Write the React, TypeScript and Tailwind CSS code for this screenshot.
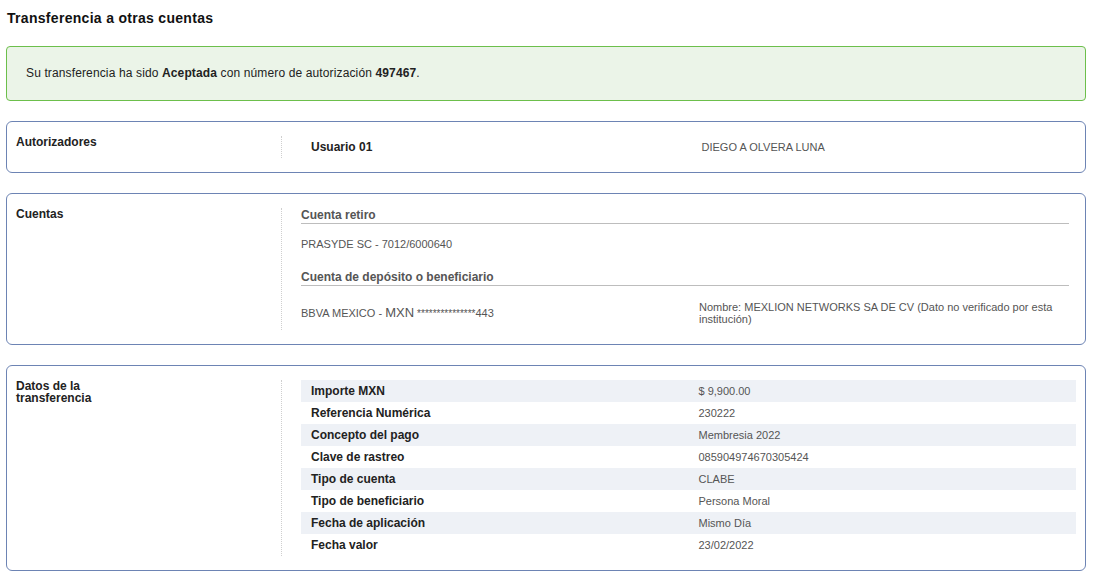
import React from "react";

function Card({ label, children }: { label: React.ReactNode; children: React.ReactNode }) {
  return (
    <div className="flex rounded-[6px] border border-[#6d84b4] bg-white px-[9px] py-[14px]">
      <div className="w-[265px] shrink-0 text-[12px] font-bold leading-[12px] text-[#222]">{label}</div>
      <div className="min-w-0 flex-1 border-l border-dotted border-[#cfcfcf] pl-[19px]">{children}</div>
    </div>
  );
}

const rows: [string, string][] = [
  ["Importe MXN", "$ 9,900.00"],
  ["Referencia Numérica", "230222"],
  ["Concepto del pago", "Membresia 2022"],
  ["Clave de rastreo", "085904974670305424"],
  ["Tipo de cuenta", "CLABE"],
  ["Tipo de beneficiario", "Persona Moral"],
  ["Fecha de aplicación", "Mismo Día"],
  ["Fecha valor", "23/02/2022"],
];

export default function App() {
  return (
    <div
      className="min-h-[585px] w-[1092px] bg-white px-[6px] pt-[10px] pb-[14px]"
      style={{ fontFamily: '"Liberation Sans", Arial, sans-serif' }}
    >
      <h1 className="pl-[1px] text-[14px] font-bold leading-[16px] tracking-[0.3px] text-[#111]">
        Transferencia a otras cuentas
      </h1>

      <div className="mt-[20px] rounded-[4px] border border-[#6cbf4b] bg-[#ebf4e8] py-[19px] pl-[19px] text-[12px] leading-[15px] tracking-[0.13px] text-[#222]">
        Su transferencia ha sido <b>Aceptada</b> con número de autorización <b>497467</b>.
      </div>

      <div className="mt-[20px]">
        <Card label="Autorizadores">
          <div className="grid h-[22px] grid-cols-2 items-center">
            <div className="pl-[10px] text-[12px] font-bold text-[#222]">Usuario 01</div>
            <div className="pl-[13px] text-[11px] text-[#555]">DIEGO A OLVERA LUNA</div>
          </div>
        </Card>
      </div>

      <div className="mt-[20px]">
        <Card label="Cuentas">
          <div className="pr-[7px] pb-[5px]">
            <div className="border-b border-[#bdbdbd] pb-[1px] text-[12px] font-bold leading-[14px] text-[#555]">
              Cuenta retiro
            </div>
            <div className="mt-[14px] text-[11px] leading-[13px] text-[#555]">PRASYDE SC - 7012/6000640</div>
            <div className="mt-[19px] border-b border-[#bdbdbd] pb-[1px] text-[12px] font-bold leading-[14px] text-[#555]">
              Cuenta de depósito o beneficiario
            </div>
            <div className="mt-[15px] grid grid-cols-[398px_1fr] items-center">
              <div className="text-[11px] leading-[13px] text-[#555]">
                BBVA MEXICO - <span className="text-[13px]">MXN</span>{" "}
                <span className="text-[10px]">***************</span>443
              </div>
              <div className="text-[11px] leading-[12px] text-[#555]">
                Nombre: MEXLION NETWORKS SA DE CV (Dato no verificado por esta institución)
              </div>
            </div>
          </div>
        </Card>
      </div>

      <div className="mt-[20px]">
        <Card
          label={
            <>
              Datos de la
              <br />
              transferencia
            </>
          }
        >
          <div>
            {rows.map(([k, v], i) => (
              <div
                key={k}
                className={`grid h-[22px] grid-cols-2 items-center ${i % 2 === 0 ? "bg-[#eef1f6]" : ""}`}
              >
                <div className="pl-[10px] text-[12px] font-bold text-[#222]">{k}</div>
                <div className="pl-[10px] text-[11px] text-[#555]">{v}</div>
              </div>
            ))}
          </div>
        </Card>
      </div>
    </div>
  );
}
